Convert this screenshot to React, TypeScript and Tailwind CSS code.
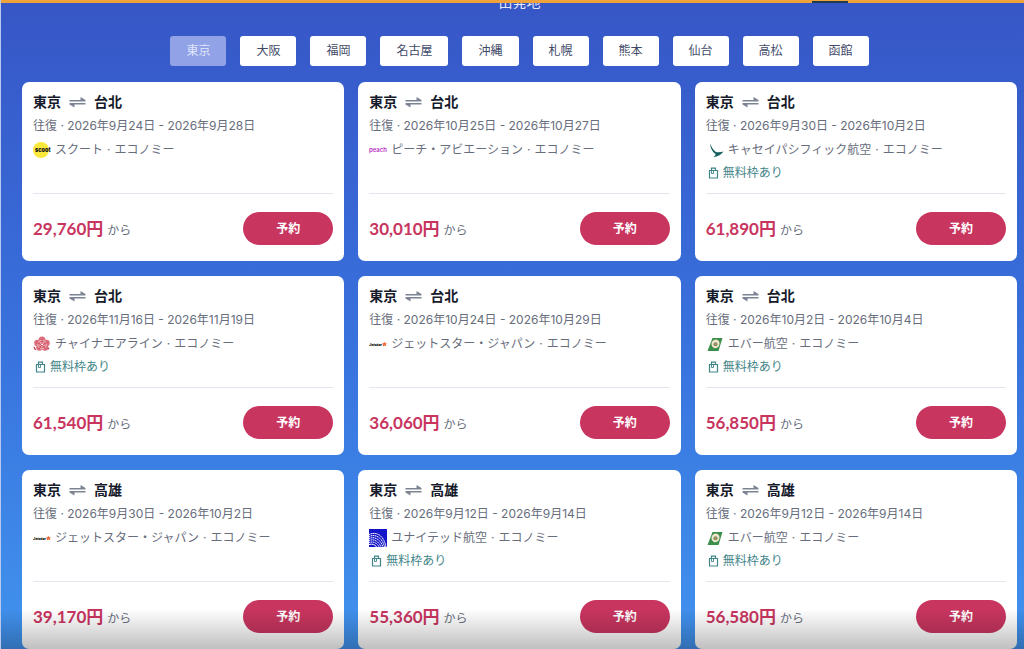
import React from "react";
import clsx from "clsx";

const CITIES = [
  "東京",
  "大阪",
  "福岡",
  "名古屋",
  "沖縄",
  "札幌",
  "熊本",
  "仙台",
  "高松",
  "函館",
];

type Airline = "scoot" | "peach" | "cathay" | "china" | "jetstar" | "eva" | "united";

interface Fare {
  to: string;
  dates: string;
  airline: Airline;
  baggage?: boolean;
  price: string;
}

const AIRLINE_NAMES: Record<Airline, string> = {
  scoot: "スクート",
  peach: "ピーチ・アビエーション",
  cathay: "キャセイパシフィック航空",
  china: "チャイナエアライン",
  jetstar: "ジェットスター・ジャパン",
  eva: "エバー航空",
  united: "ユナイテッド航空",
};

const FARES: Fare[] = [
  { to: "台北", dates: "2026年9月24日 - 2026年9月28日", airline: "scoot", price: "29,760円" },
  { to: "台北", dates: "2026年10月25日 - 2026年10月27日", airline: "peach", price: "30,010円" },
  { to: "台北", dates: "2026年9月30日 - 2026年10月2日", airline: "cathay", baggage: true, price: "61,890円" },
  { to: "台北", dates: "2026年11月16日 - 2026年11月19日", airline: "china", baggage: true, price: "61,540円" },
  { to: "台北", dates: "2026年10月24日 - 2026年10月29日", airline: "jetstar", price: "36,060円" },
  { to: "台北", dates: "2026年10月2日 - 2026年10月4日", airline: "eva", baggage: true, price: "56,850円" },
  { to: "高雄", dates: "2026年9月30日 - 2026年10月2日", airline: "jetstar", price: "39,170円" },
  { to: "高雄", dates: "2026年9月12日 - 2026年9月14日", airline: "united", baggage: true, price: "55,360円" },
  { to: "高雄", dates: "2026年9月12日 - 2026年9月14日", airline: "eva", baggage: true, price: "56,580円" },
];

const LOGOS: Record<Airline, React.ReactNode> = {
  scoot: (
    <>
      <circle cx="8" cy="9" r="8" fill="#fbe83c" />
      <text x="2" y="11" fontSize="5.500" fontWeight="900" fill="#1b1b1b">
        scoot
      </text>
    </>
  ),
  peach: (
    <text x="0" y="11" fontSize="6" fontWeight="600" fill="#b92fc4">
      peach
    </text>
  ),
  cathay: (
    <path
      d="M4 2.500C5.500 6 7.500 9.500 10 11C12.500 11.700 15 11.300 17.500 10.500C15.500 13.500 12 15.500 7 16.200C8.800 15.200 9.800 14 9.500 13C6.500 11 4.300 7 4 2.500Z"
      fill="#17605f"
    />
  ),
  china: (
    <>
      <g fill="#dc6f7c">
        <circle cx="9" cy="5" r="3.500" />
        <circle cx="4.500" cy="8" r="3.300" />
        <circle cx="13.500" cy="8" r="3.300" />
        <circle cx="6.500" cy="12.500" r="3.300" />
        <circle cx="12" cy="12.500" r="3.300" />
      </g>
      <g fill="none" stroke="#fbe3e5" strokeWidth="0.700">
        <circle cx="9" cy="9.500" r="2.300" />
        <circle cx="9" cy="9.500" r="4.300" />
      </g>
      <g fill="none" stroke="#c9374b" strokeWidth="0.800">
        <path d="M9 9V4M8 9.500L3.500 7.500M10 9.500L14.500 7.500M8.500 10.500L5.800 14M9.500 10.500L12.400 14" />
      </g>
      <path d="M1 12L2.500 15M15 13L16 14" stroke="#c22d42" strokeWidth="1.200" />
    </>
  ),
  jetstar: (
    <>
      <text x="0" y="10.500" fontSize="3.600" fontWeight="900" fontStyle="italic" fill="#111">
        Jetstar
      </text>
      <path
        d="M15.200 6.500L16 8.200L17.900 8L16.700 9.500L17.500 11.300L15.500 10.600L13.800 11.600L14.100 9.700L13 8.300L14.600 8.200Z"
        fill="#f26430"
      />
    </>
  ),
  eva: (
    <>
      <path d="M6.500 3H16.500L12.500 16H1.500Z" fill="#3b8f4a" />
      <ellipse cx="9.500" cy="8.800" rx="4" ry="4.400" fill="#f3e3cf" transform="rotate(20 9.500 8.800)" />
      <circle cx="9.500" cy="9.200" r="2" fill="#6d9460" />
      <circle cx="9.500" cy="9.200" r="0.900" fill="#e2894d" />
    </>
  ),
  united: (
    <>
      <path d="M0 0H18V18H0Z" fill="#1414c8" />
      <g fill="none" stroke="#fff" strokeWidth="1">
        <path d="M0 5.500C8 2 15 7 17 18" strokeDasharray="1.600 0.500" />
        <path d="M0 7.500C7 4.500 13.500 9 15.500 18" strokeDasharray="1.500 0.500" />
        <path d="M0 9.500C6 7 12 11 13.800 18" strokeDasharray="1.500 0.500" />
        <path d="M0 11.500C5 9.500 10 12.500 12 18" strokeDasharray="1.400 0.500" />
        <path d="M0 13.500C4 12 8.500 14 10 18" strokeDasharray="1.400 0.500" />
        <path d="M0 15.500C3 14.500 6.500 15.500 7.500 18" />
      </g>
    </>
  ),
};

const FareCard = ({ to, dates, airline, baggage, price }: Fare) => {
  return (
    <article className="rounded-[7px] bg-white px-[11px] pt-[11px] pb-4">
      <div className="min-h-[101px] border-b border-[#e3e6ee]">
        <h2 className="flex items-center gap-2 text-sm leading-[18px] font-bold text-[#161b2c]">
          東京
          <svg className="h-3 w-[17px]" viewBox="0 0 17 12" fill="#7c8494" aria-hidden="true">
            <path d="M0.500 4H11.500V1L16.500 4V5.400H0.500Z" />
            <path d="M16.500 8.400H5.500V11.400L0.500 8.400V7H16.500Z" />
          </svg>
          {to}
        </h2>
        <p className="mt-1.5 text-xs leading-[18px] text-[#676d7c]">往復 · {dates}</p>
        <p className="mt-1.5 flex items-center gap-1 text-xs leading-[18px] text-[#676d7c]">
          <svg className="size-[18px] shrink-0 overflow-visible" viewBox="0 0 18 18" aria-hidden="true">
            {LOGOS[airline]}
          </svg>
          <span>{AIRLINE_NAMES[airline]}</span>
          <span>·</span>
          <span>エコノミー</span>
        </p>
        {baggage && (
          <p className="mt-1.5 flex items-center gap-1 pl-0.5 text-xs leading-4 text-[#3f8588]">
            <svg className="h-3 w-[11px]" viewBox="0 0 11 12" fill="none" aria-hidden="true">
              <path d="M1.500 3.500H9.500V11H1.500ZM3.500 3.500V1.200H7.500V3.500" stroke="#3f8588" strokeWidth="1.200" />
              <path d="M3.500 4V6.500H5.500V4" stroke="#3f8588" strokeWidth="0.900" />
            </svg>
            無料枠あり
          </p>
        )}
      </div>
      <div className="mt-[18px] flex items-center justify-between">
        <p className="flex items-baseline gap-1 text-xs text-[#676d7c]">
          <strong className="font-[Lato,'Noto_Sans_CJK_JP',sans-serif] text-[17px] leading-6 font-bold text-[#c8355f]">
            {price}
          </strong>
          から
        </p>
        <button
          type="button"
          className="h-[33px] w-[90px] rounded-full bg-[#c8355f] text-xs font-bold text-white"
        >
          予約
        </button>
      </div>
    </article>
  );
};

const App = () => {
  return (
    <main className="relative min-h-screen overflow-hidden border-l border-[#b9c8ee] bg-linear-to-b from-[#3756c6] via-[#3870dc] to-[#4193ee] font-[Inter,'Noto_Sans_CJK_JP',sans-serif]">
      <div className="absolute inset-x-0 top-0 z-10 flex h-[3px] items-end bg-[#f0a33c]">
        <div className="ml-[79.3%] h-0.5 w-9 bg-[#1e3d50]" />
      </div>
      <div className="pr-[7px] pl-[21px]">
        <h1 className="-mt-2 text-center text-sm leading-5 text-[#e4e9fa]">出発地</h1>
        <nav aria-label="出発地" className="mt-6 flex flex-wrap justify-center gap-3.5">
          {CITIES.map((city, i) => (
            <button
              key={city}
              type="button"
              aria-pressed={i === 0}
              className={clsx(
                "h-[30px] rounded-[3px] px-4 text-xs",
                i === 0 ? "bg-[#91a2e6] text-[#dfe5fb]" : "bg-white text-[#3f4a68]"
              )}
            >
              {city}
            </button>
          ))}
        </nav>
        <section className="mt-4 grid grid-cols-3 gap-x-3.5 gap-y-[15px]">
          {FARES.map((fare, i) => (
            <FareCard key={i} {...fare} />
          ))}
        </section>
      </div>
      <div className="pointer-events-none absolute inset-x-0 bottom-0 h-10 bg-linear-to-b from-transparent to-black/25" />
    </main>
  );
};

export default App;
